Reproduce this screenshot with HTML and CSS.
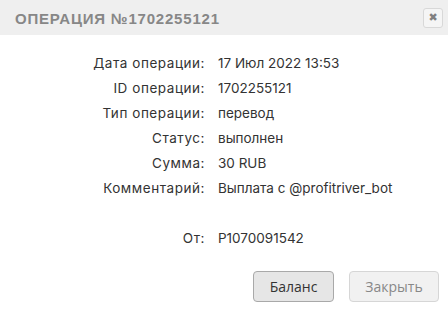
FILE: index.html
```html
<!DOCTYPE html>
<html>
<head>
<meta charset="utf-8">
<link rel="stylesheet" href="styles.css">
</head>
<body>
<div class="dialog">
  <div class="header">
    <span class="title">ОПЕРАЦИЯ №1702255121</span>
    <button class="close" aria-label="close">&#x2716;</button>
  </div>
  <div class="content">
    <div class="details">
      <div class="label">Дата операции:</div><div class="value">17 Июл 2022 13:53</div>
      <div class="label">ID операции:</div><div class="value">1702255121</div>
      <div class="label">Тип операции:</div><div class="value">перевод</div>
      <div class="label">Статус:</div><div class="value">выполнен</div>
      <div class="label">Сумма:</div><div class="value">30 RUB</div>
      <div class="label">Комментарий:</div><div class="value">Выплата с @profitriver_bot</div>
      <div class="label spacer"></div><div class="value spacer"></div>
      <div class="label">От:</div><div class="value">P1070091542</div>
    </div>
  </div>
  <div class="footer">
    <button class="btn primary">Баланс</button>
    <button class="btn secondary">Закрыть</button>
  </div>
</div>
</body>
</html>
```
FILE: styles.css
```css
html, body {
  margin: 0;
  padding: 0;
  background: #ffffff;
}
.dialog {
  width: 448px;
  height: 310px;
  display: flex;
  flex-direction: column;
  font-family: "Inter", "DejaVu Sans", sans-serif;
}
.header {
  height: 35px;
  background: #efefef;
  display: flex;
  align-items: center;
  justify-content: space-between;
  padding: 0 5px 0 15px;
}
.title {
  font-family: "Liberation Sans", sans-serif;
  font-weight: bold;
  font-size: 15px;
  color: #878787;
  letter-spacing: 0.8px;
  margin-top: 1px;
}
.close {
  width: 20px;
  height: 20px;
  padding: 0;
  margin-top: 1px;
  border: 1px solid #d8d8d8;
  border-radius: 3px;
  background: #f5f5f5;
  color: #808080;
  font-size: 11px;
  line-height: 18px;
  text-align: center;
  font-family: "DejaVu Sans", sans-serif;
}
.content {
  padding: 16px 0 0 0;
}
.details {
  display: grid;
  grid-template-columns: 205px auto;
  column-gap: 13px;
  grid-auto-rows: 25px;
  font-size: 13.5px;
  color: #333333;
}
.label {
  text-align: right;
  line-height: 25px;
  letter-spacing: 0.55px;
}
.value {
  line-height: 25px;
  letter-spacing: 0;
}
.footer {
  display: flex;
  justify-content: flex-end;
  gap: 15px;
  padding: 20px 9px 0 0;
}
.btn {
  height: 31px;
  font-family: "Open Sans", "DejaVu Sans", sans-serif;
  font-size: 14px;
  border-radius: 4px;
  padding: 0;
}
.primary {
  width: 81px;
  background: #e6e6e6;
  border: 1px solid #a9a9a9;
  color: #333333;
}
.secondary {
  width: 90px;
  background: #f1f1f1;
  border: 1px solid #d6d6d6;
  color: #888888;
}
```
